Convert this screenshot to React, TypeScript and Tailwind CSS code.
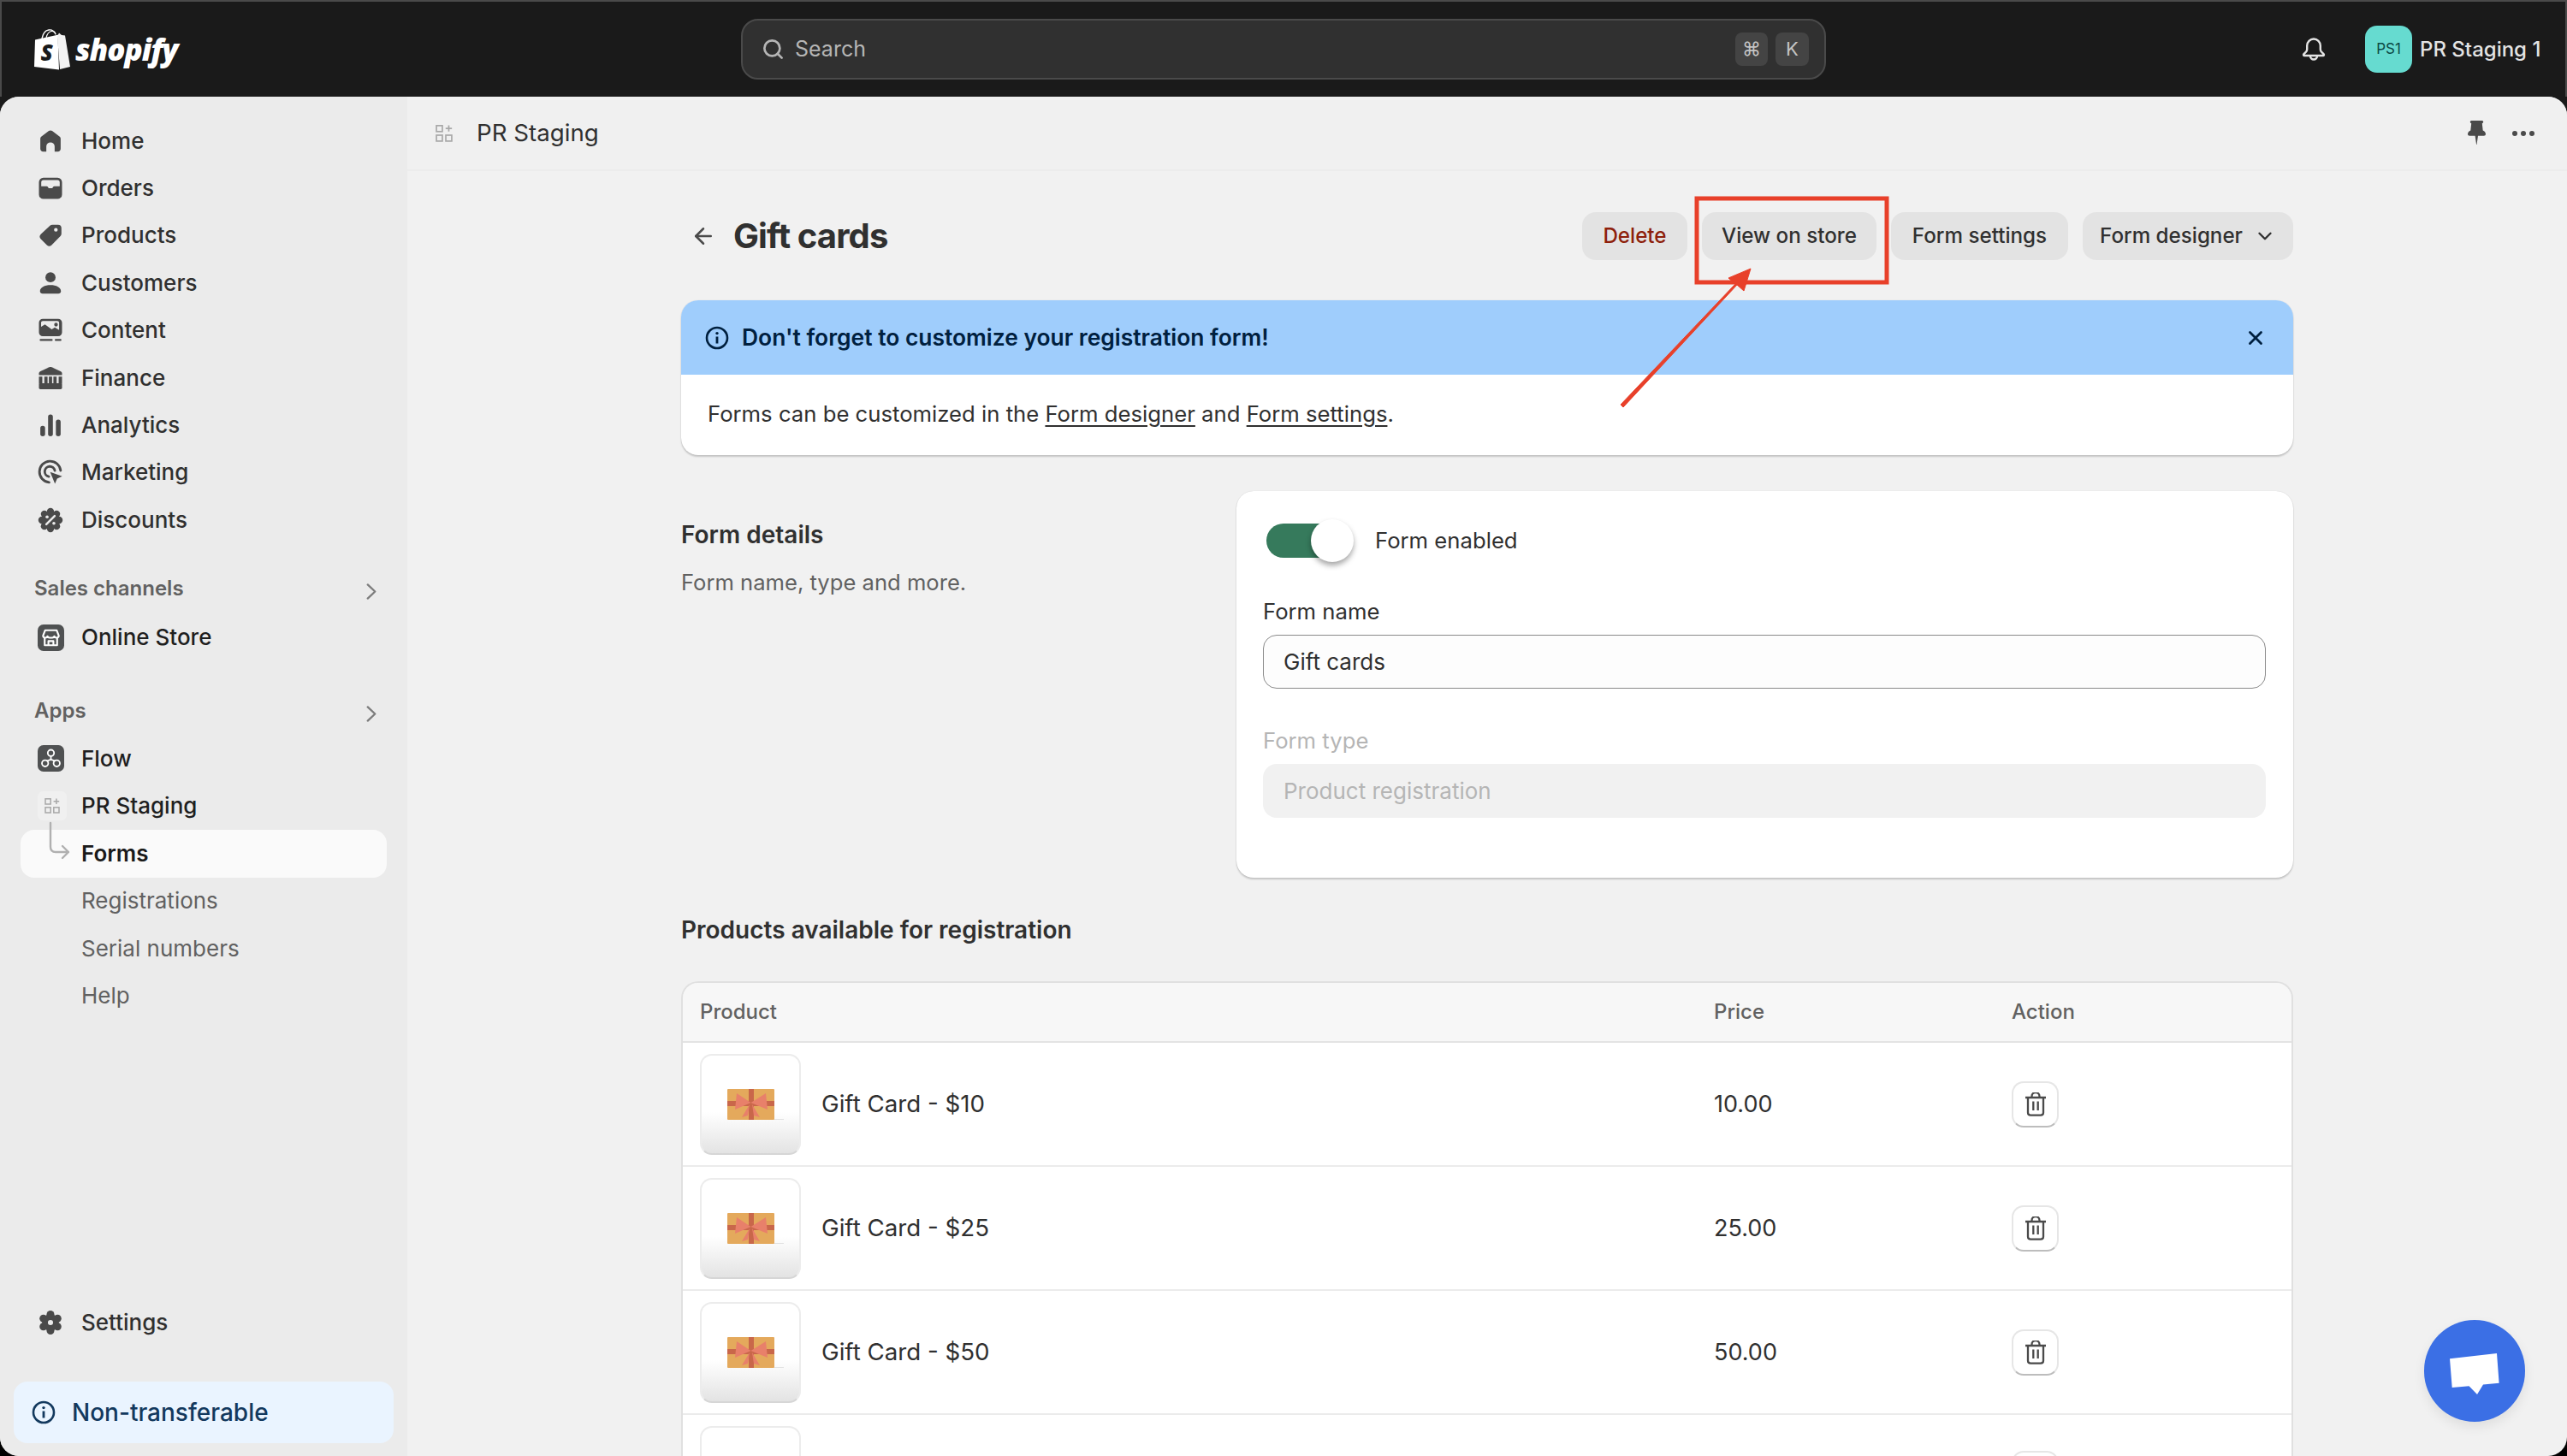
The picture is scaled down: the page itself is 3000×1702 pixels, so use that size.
import React from "react";
import { Search, ChevronDown, ArrowLeft, X } from "lucide-react";

/* ===== icons ===== */
type IconProps = { className?: string };

const Box: React.FC<{ children: React.ReactNode; className?: string }> = ({ children, className }) => (
    <svg viewBox="0 0 20 20" fill="currentColor" className={className ?? "h-[36px] w-[36px] text-[#4a4a4a]"}>
        {children}
    </svg>
);

const HomeIcon = () => (
    <Box>
        <path d="M10 3c-.4 0-.8.13-1.1.38L4 7.1c-.4.3-.6.75-.6 1.2v6.7c0 1 .8 1.8 1.8 1.8h2.100v-3.300a2.700 2.700 0 0 1 5.400 0v3.300h2.100c1 0 1.800-.8 1.800-1.800V8.300c0-.45-.2-.9-.6-1.200l-4.900-3.720A1.800 1.800 0 0 0 10 3Z" />
    </Box>
);
const OrdersIcon = () => (
    <Box>
        <path
            fillRule="evenodd"
            d="M5.400 3.200h9.200a2.900 2.900 0 0 1 2.900 2.900v8a2.900 2.900 0 0 1-2.900 2.900H5.400a2.900 2.900 0 0 1-2.900-2.900v-8a2.900 2.900 0 0 1 2.900-2.900ZM4 8.800V6.100c0-.8.6-1.400 1.400-1.400h9.200c.8 0 1.400.6 1.400 1.400v2.700h-3.500c-.4 0-.7.2-.9.5l-.4.7H8.800l-.4-.7a1 1 0 0 0-.9-.5H4Z"
        />
    </Box>
);
const ProductsIcon = () => (
    <Box>
        <path
            fillRule="evenodd"
            d="M11.300 3.200h3.600a2.200 2.200 0 0 1 2.200 2.200V9a2.200 2.200 0 0 1-.65 1.550l-5.700 5.800a2.200 2.200 0 0 1-3.100 0l-3.900-3.900a2.200 2.200 0 0 1 0-3.100l5.800-5.500c.45-.42 1.050-.65 1.750-.65ZM13.500 5.300a1.200 1.200 0 1 0 0 2.400 1.200 1.200 0 0 0 0-2.400Z"
        />
    </Box>
);
const CustomersIcon = () => (
    <Box>
        <circle cx="10" cy="6.200" r="3.300" />
        <path d="M3.200 15.300c0-2.500 3-4 6.800-4s6.800 1.500 6.800 4c0 1-.8 1.500-1.700 1.500H4.900c-.9 0-1.700-.5-1.700-1.500Z" />
    </Box>
);
const ContentIcon = () => (
    <Box>
        <path
            fillRule="evenodd"
            d="M5 2.600h10A2.500 2.500 0 0 1 17.500 5.100v6.300a2.500 2.500 0 0 1-2.500 2.500H5a2.500 2.500 0 0 1-2.500-2.500V5.100A2.500 2.500 0 0 1 5 2.600Zm0 1.400c-.6 0-1.100.5-1.100 1.100v2.700l2.500-1.600 4.400 3.200 2-1.200 2.800 1.600V5.100c0-.6-.5-1.100-1.100-1.100H5Zm8.600 1.200a1.200 1.200 0 1 0 0 2.400 1.200 1.200 0 0 0 0-2.400Z"
        />
        <rect x="3" y="15.700" width="8.400" height="1.200" rx=".5" />
        <rect x="12.800" y="15.700" width="4.300" height="1.200" rx=".5" />
    </Box>
);
const FinanceIcon = () => (
    <Box>
        <path d="M9.200 2.900c.5-.2 1.100-.2 1.600 0l5.700 2.600c.6.3 1 .8 1 1.400v1.200h-15V6.900c0-.6.4-1.100 1-1.400l5.700-2.600Z" />
        <path d="M2.500 9h2.200v4.800H2.500zM6 9h2.100v4.800H6zM8.950 9h2.100v4.800h-2.100zM11.900 9H14v4.800h-2.100zM15.300 9h2.200v4.800h-2.200z" />
        <rect x="2.500" y="13.300" width="15" height="3.900" rx=".9" />
    </Box>
);
const AnalyticsIcon = () => (
    <Box>
        <rect x="3.400" y="10.400" width="3.100" height="6.800" rx="1.500" />
        <rect x="8.450" y="3" width="3.100" height="14.200" rx="1.500" />
        <rect x="13.500" y="6.400" width="3.100" height="10.800" rx="1.500" />
    </Box>
);
const MarketingIcon = () => (
    <Box>
        <g fill="none" stroke="currentColor" strokeWidth="1.600" strokeLinecap="round">
            <path d="M16.600 8.900A6.900 6.900 0 1 0 9.100 16.600" />
            <path d="M12.800 8.900A3.300 3.300 0 1 0 8.900 12.800" />
        </g>
        <path d="m9.800 9.800 7.800 2.900-3.300 1.400-1.400 3.400-3.100-7.700Z" />
    </Box>
);
const DiscountsIcon = () => (
    <Box>
        {[0, 45, 90, 135, 180, 225, 270, 315].map((a) => (
            <circle key={a} cx={10 + 5.6 * Math.cos((a * Math.PI) / 180)} cy={10 + 5.6 * Math.sin((a * Math.PI) / 180)} r="2.300" />
        ))}
        <circle cx="10" cy="10" r="5.800" />
        <path d="m12.700 7.300-5.400 5.400" stroke="#ebebeb" strokeWidth="1.400" strokeLinecap="round" />
        <circle cx="7.800" cy="7.900" r="1" fill="#ebebeb" />
        <circle cx="12.200" cy="12.100" r="1" fill="#ebebeb" />
    </Box>
);
const SettingsIcon = () => (
    <Box>
        {[30, 90, 150, 210, 270, 330].map((a) => (
            <circle key={a} cx={10 + 5.3 * Math.cos((a * Math.PI) / 180)} cy={10 + 5.3 * Math.sin((a * Math.PI) / 180)} r="2.500" />
        ))}
        <circle cx="10" cy="10" r="5.500" />
        <circle cx="10" cy="10" r="1.700" fill="#ebebeb" />
    </Box>
);
const StoreIcon = () => (
    <svg viewBox="0 0 32 32" className="h-[31px] w-[31px]">
        <rect width="32" height="32" rx="7" fill="#4f5152" />
        <g fill="none" stroke="#fff" strokeWidth="2.200" strokeLinejoin="round">
            <path d="M9 7h14l2.500 6.500c0 1.600-1.300 2.500-2.700 2.500-1.300 0-2.300-.8-2.600-1.800-.4 1-1.300 1.800-2.600 1.800H14.400c-1.300 0-2.200-.8-2.600-1.800-.3 1-1.300 1.800-2.600 1.800-1.400 0-2.700-.9-2.700-2.500L9 7Z" />
            <path d="M8.500 16v9h15v-9" />
            <path d="M13 25v-5h6v5" />
        </g>
    </svg>
);
const FlowIcon = () => (
    <svg viewBox="0 0 32 32" className="h-[31px] w-[31px]">
        <rect width="32" height="32" rx="7" fill="#4f5152" />
        <g fill="none" stroke="#fff" strokeWidth="1.900">
            <circle cx="16" cy="9.500" r="3.800" />
            <circle cx="9" cy="22" r="3.800" />
            <circle cx="23" cy="22" r="3.800" />
            <path d="M16 13.300v4.200M16 17.500l-5.200 1.800M16 17.500l5.200 1.800" />
        </g>
    </svg>
);
const AppTileIcon: React.FC<IconProps> = ({ className }) => (
    <svg viewBox="0 0 34 34" className={className}>
        <rect width="34" height="34" rx="6" fill="#f0f0f0" />
        <g fill="none" stroke="#a8a8a8" strokeWidth="1.500">
            <rect x="9" y="8.800" width="6.200" height="6.200" />
            <rect x="9" y="18.800" width="6.200" height="6.200" />
            <rect x="18.800" y="18.800" width="6.200" height="6.200" />
            <path d="M21.900 8.500v6.500M18.600 11.800h6.600" />
        </g>
    </svg>
);
const InfoIcon: React.FC<IconProps> = ({ className }) => (
    <svg viewBox="0 0 28 28" fill="none" className={className}>
        <circle cx="14" cy="14" r="12" stroke="currentColor" strokeWidth="2.600" />
        <circle cx="14" cy="8.600" r="1.700" fill="currentColor" />
        <path d="M14 12.500v8" stroke="currentColor" strokeWidth="2.800" />
    </svg>
);
const ChevronRightSmall = () => (
    <svg viewBox="0 0 12 20" fill="none" className="h-[19px] w-[12px]">
        <path d="m1.500 1.500 9 8.500-9 8.500" stroke="#7c7c7c" strokeWidth="2.400" strokeLinecap="round" strokeLinejoin="round" />
    </svg>
);
const BellIcon = () => (
    <svg viewBox="0 0 28 28" fill="none" className="h-[28px] w-[28px] text-[#e3e3e3]">
        <path
            d="M14 1.500a7.800 7.800 0 0 0-7.800 7.800v4.200c0 1-.3 2-.9 2.800l-3 3.100c-.6.700-.1 1.600.7 1.600h22c.8 0 1.300-.9.700-1.600l-3-3.100c-.6-.8-.9-1.800-.9-2.800V9.300A7.800 7.800 0 0 0 14 1.500Z"
            stroke="currentColor"
            strokeWidth="2.400"
        />
        <path d="M10 21.500a4 4 0 0 0 8 0" stroke="currentColor" strokeWidth="2.400" />
    </svg>
);
const PinIcon = () => (
    <svg viewBox="0 0 21 29" className="h-[29px] w-[21px]" fill="#4a4a4a">
        <path d="M4.500 0h12c1 0 1.700.7 1.700 1.600 0 .8-.6 1.400-1.400 1.600l.9 8.200c2 1 3.300 2.500 3.300 4.300 0 1.200-.9 2-2.100 2h-6.900l-1.500 10.300h-.4L8.600 17.700H2.100c-1.200 0-2.100-.8-2.100-2 0-1.800 1.300-3.300 3.300-4.300l.9-8.200C3.400 3 2.800 2.400 2.800 1.600 2.800.7 3.500 0 4.500 0Z" />
    </svg>
);
const TrashIcon = () => (
    <svg viewBox="0 0 26 28" fill="none" className="h-[28px] w-[26px]" stroke="#4a4a4a" strokeWidth="2.300">
        <path d="M1 6h24M8.500 6V4.500a4.500 4.500 0 0 1 9 0V6" />
        <path d="M4 6v17.500c0 1.800 1.400 3.200 3.200 3.200h11.600c1.800 0 3.200-1.400 3.200-3.200V6" />
        <path d="M10.300 10.500V21M15.700 10.500V21" />
    </svg>
);
const GiftBox = () => (
    <svg viewBox="0 0 70 38" className="h-[38px] w-[70px]">
        <rect x="0" y="1" width="55" height="36" rx="1" fill="#e4a95c" />
        <rect x="25" y="1" width="6" height="36" fill="#c9674a" />
        <rect x="0" y="15" width="55" height="6" fill="#c9674a" />
        <path d="M27.500 17 11 6 9 25ZM27.500 17 45 6l2 19Z" fill="#e8806a" />
        <path d="m26 19-9 15 7-2ZM29 19l9 15-7-2Z" fill="#e8806a" />
        <path d="M55 36h11v1H55z" fill="#e2e2e2" />
    </svg>
);
const ShopifyBag = () => (
    <svg viewBox="0 0 42 48" className="h-[48px] w-[42px]">
        <path d="M27 8.500 30 47l12-3L36 7.500l-4-.5-3-2.500Z" fill="#fff" opacity=".95" />
        <path d="M28.500 6.500 1 12.500 0 44l29 3.500-1.500-39Z" fill="#fff" />
        <path d="M9 11c1-5 4-9.500 8-10 3-.4 6 .5 8 5" fill="none" stroke="#fff" strokeWidth="1.400" />
        <path d="M14 10c1-4 3-7 6-7.500 2.500-.3 4.500 1 5 4" fill="none" stroke="#fff" strokeWidth="1.200" />
        <text x="14.500" y="37" textAnchor="middle" fontFamily="'Open Sans', sans-serif" fontSize="26" fontStyle="italic" fontWeight="800" fill="#1a1a1a">
            S
        </text>
    </svg>
);

/* ===== sidebar ===== */
const Row: React.FC<{ icon?: React.ReactNode; label: string; textClass?: string }> = ({
    icon,
    label,
    textClass = "font-medium text-[#303030]",
}) => (
    <div className="flex h-[55.4px] items-center">
        <div className="w-[95px] shrink-0 pl-[41px]">{icon}</div>
        <span className={`text-[26px] leading-none ${textClass}`}>{label}</span>
    </div>
);

const MAIN_NAV = [
    { label: "Home", icon: <HomeIcon /> },
    { label: "Orders", icon: <OrdersIcon /> },
    { label: "Products", icon: <ProductsIcon /> },
    { label: "Customers", icon: <CustomersIcon /> },
    { label: "Content", icon: <ContentIcon /> },
    { label: "Finance", icon: <FinanceIcon /> },
    { label: "Analytics", icon: <AnalyticsIcon /> },
    { label: "Marketing", icon: <MarketingIcon /> },
    { label: "Discounts", icon: <DiscountsIcon /> },
];

const SectionTitle: React.FC<{ label: string }> = ({ label }) => (
    <div className="flex h-[55px] items-center justify-between pr-[36px] pl-[40px]">
        <span className="text-[24px] leading-none font-semibold text-[#616161]">{label}</span>
        <span className="mt-[6px]">
            <ChevronRightSmall />
        </span>
    </div>
);

const Sidebar = () => (
    <aside className="flex w-[476px] shrink-0 flex-col bg-[#ebebeb] pt-[24px] pb-[15px]">
        {MAIN_NAV.map((n) => (
            <Row key={n.label} label={n.label} icon={n.icon} />
        ))}
        <div className="mt-[25px] pb-[2px]">
            <SectionTitle label="Sales channels" />
        </div>
        <Row label="Online Store" icon={<div className="ml-[3px]"><StoreIcon /></div>} textClass="font-medium text-[#1f1f1f]" />
        <div className="mt-[31px]">
            <SectionTitle label="Apps" />
        </div>
        <Row label="Flow" icon={<div className="ml-[3px]"><FlowIcon /></div>} textClass="font-medium text-[#1f1f1f]" />
        <Row label="PR Staging" icon={<AppTileIcon className="ml-[3px] h-[34px] w-[34px]" />} textClass="font-medium text-[#1f1f1f]" />
        <div className="relative mx-[24px] flex h-[56px] items-center rounded-[16px] bg-[#fafafa] pl-[71px]">
            <svg viewBox="0 0 30 46" fill="none" className="absolute top-[-10px] left-[33px] h-[46px] w-[30px]" stroke="#b0b0b0" strokeWidth="2.400" strokeLinecap="round" strokeLinejoin="round">
                <path d="M2 2v28c0 4 2 6 6 6h15M16 29l7 7-7 7" />
            </svg>
            <span className="text-[26px] leading-none font-semibold text-[#1a1a1a]">Forms</span>
        </div>
        <Row label="Registrations" textClass="font-normal text-[#616161]" />
        <Row label="Serial numbers" textClass="font-normal text-[#616161]" />
        <Row label="Help" textClass="font-normal text-[#616161]" />
        <div className="mt-auto mb-[41px]">
            <Row label="Settings" icon={<SettingsIcon />} />
        </div>
        <div className="mx-[16px] flex h-[72px] items-center gap-[19px] rounded-[16px] bg-[#eaf4ff] pl-[21px] text-[#13395e]">
            <InfoIcon className="h-[28px] w-[28px]" />
            <span className="text-[28px] leading-none font-medium">Non-transferable</span>
        </div>
    </aside>
);

/* ===== page ===== */
const Btn: React.FC<{ children: React.ReactNode; className?: string }> = ({ children, className = "text-[#303030]" }) => (
    <div className={`flex h-[56px] items-center justify-center rounded-[16px] bg-[#e3e3e3] text-[24.2px] leading-none font-medium ${className}`}>
        {children}
    </div>
);

const PRODUCTS = [
    { name: "Gift Card - $10", price: "10.00" },
    { name: "Gift Card - $25", price: "25.00" },
    { name: "Gift Card - $50", price: "50.00" },
];

const ProductRow: React.FC<{ name: string; price: string }> = ({ name, price }) => (
    <div className="grid h-[145px] grid-cols-[1205px_348px_1fr] items-center border-b-2 border-[#ebebeb] bg-white leading-none text-[#303030]">
        <div className="flex items-center pl-[20px]">
            <div className="flex h-[118px] w-[118px] items-center justify-center rounded-[14px] border-2 border-[#ececec] border-b-[#d6d6d6] bg-[linear-gradient(#ffffff_58%,#e3e3e3)] pl-[15px]">
                <GiftBox />
            </div>
            <span className="ml-[24px] text-[27.7px]">{name}</span>
        </div>
        <div className="text-[27px]">{price}</div>
        <div>
            <div className="flex h-[54px] w-[55px] items-center justify-center rounded-[14px] border-2 border-[#e6e6e6] border-b-[#bdbdbd] bg-white">
                <TrashIcon />
            </div>
        </div>
    </div>
);

export default function App() {
    return (
        <div className="relative h-[1702px] w-[3000px] overflow-hidden bg-[linear-gradient(#1a1a1a_50%,#000000_50%)] font-['Inter',sans-serif]">
            {/* top bar */}
            <header className="relative flex h-[113px] items-center border-x-2 border-t-2 border-b-0 border-[#4a4a4a] bg-[#1a1a1a]">
                <div className="flex w-[864px] shrink-0 items-center pl-[38px]">
                    <ShopifyBag />
                    <span className="ml-[6px] font-['Open_Sans',sans-serif] text-[35px] leading-none font-extrabold tracking-[-1px] text-white italic">shopify</span>
                </div>
                <div className="flex h-[71px] w-[1268px] items-center rounded-[20px] border-2 border-[#4a4a4a] bg-[#303030] pr-[18px] pl-[22px]">
                    <Search className="h-[27px] w-[27px] text-[#b5b5b5]" strokeWidth={2.4} />
                    <span className="ml-[12px] text-[25px] leading-none text-[#b5b5b5]">Search</span>
                    <div className="ml-auto flex gap-[9px]">
                        <div className="flex h-[39px] w-[38px] items-center justify-center rounded-[8px] bg-[#444444] text-[22px] text-[#c4c4c4]">⌘</div>
                        <div className="flex h-[39px] w-[39px] items-center justify-center rounded-[8px] bg-[#444444] text-[22px] text-[#c4c4c4]">K</div>
                    </div>
                </div>
                <div className="ml-[556px]">
                    <BellIcon />
                </div>
                <div className="ml-[46px] flex h-[55px] w-[55px] items-center justify-center rounded-[14px] bg-[#66dbd0] text-[17px] leading-none text-[#0c4a45]">PS1</div>
                <span className="ml-[9px] text-[24px] leading-none font-medium whitespace-nowrap text-[#e3e3e3]">PR Staging 1</span>
            </header>

            {/* panel */}
            <div className="flex h-[1589px] overflow-hidden rounded-[22px] bg-[#f1f1f1]">
                <Sidebar />
                <main className="flex min-w-0 flex-1 flex-col">
                    <div className="flex h-[87px] shrink-0 items-center border-b-2 border-[#ececec] bg-[#f0f0f0] pr-[38px] pl-[24px]">
                        <AppTileIcon className="h-[38px] w-[38px]" />
                        <span className="ml-[19px] pt-[1px] text-[27.7px] leading-none font-normal text-[#303030]">PR Staging</span>
                        <div className="ml-auto flex items-center gap-[31px]">
                            <PinIcon />
                            <div className="flex gap-[4px]">
                                <span className="h-[6px] w-[6px] rounded-full bg-[#4a4a4a]" />
                                <span className="h-[6px] w-[6px] rounded-full bg-[#4a4a4a]" />
                                <span className="h-[6px] w-[6px] rounded-full bg-[#4a4a4a]" />
                            </div>
                        </div>
                    </div>

                    <div className="mx-auto w-[1884px] pt-[48px]">
                        {/* title row */}
                        <div className="flex h-[56px] items-center">
                            <ArrowLeft className="ml-[11px] h-[30px] w-[30px] text-[#4a4a4a]" strokeWidth={2} />
                            <h1 className="ml-[20px] text-[40px] leading-none font-bold tracking-[-0.9px] text-[#303030]">Gift cards</h1>
                            <div className="ml-auto flex gap-[17px]">
                                <Btn className="w-[123px] text-[#8e1f0b]">Delete</Btn>
                                <Btn className="w-[204px] text-[#303030]">View on store</Btn>
                                <Btn className="w-[207px] text-[#303030]">Form settings</Btn>
                                <Btn className="w-[246px] gap-[13px] text-[#303030]">
                                    Form designer
                                    <ChevronDown className="h-[26px] w-[26px]" strokeWidth={2.2} />
                                </Btn>
                            </div>
                        </div>

                        {/* banner */}
                        <div className="mt-[47px] h-[181px] overflow-hidden rounded-[20px] bg-white shadow-[0_2px_2px_rgba(0,0,0,0.18),0_0_1px_rgba(0,0,0,0.2)]">
                            <div className="flex h-[87px] items-center bg-[#9fcdfc] pr-[31px] pl-[28px] text-[#00203f]">
                                <InfoIcon className="h-[28px] w-[28px]" />
                                <span className="ml-[15px] text-[26.4px] leading-none font-semibold">Don't forget to customize your registration form!</span>
                                <X className="ml-auto h-[26px] w-[26px]" strokeWidth={2.6} />
                            </div>
                            <div className="flex h-[94px] items-center pb-[3px] pl-[31px] text-[25.7px] leading-none text-[#303030]">
                                <span>
                                    Forms can be customized in the <span className="underline underline-offset-4">Form designer</span> and{" "}
                                    <span className="underline underline-offset-4">Form settings</span>.
                                </span>
                            </div>
                        </div>

                        {/* form details */}
                        <div className="mt-[42px] flex">
                            <div className="w-[649px] shrink-0 pt-[37px]">
                                <div className="text-[28px] leading-[28px] font-semibold text-[#303030]">Form details</div>
                                <div className="mt-[28px] text-[25.6px] leading-[28px] text-[#616161]">Form name, type and more.</div>
                            </div>
                            <div className="h-[452px] flex-1 rounded-[20px] bg-white pt-[33px] pr-[32px] pl-[31px] shadow-[0_2px_2px_rgba(0,0,0,0.18),0_0_1px_rgba(0,0,0,0.2)]">
                                <div className="flex h-[50px] items-center pl-[4px]">
                                    <div className="relative h-[40px] w-[88px]">
                                        <div className="h-[40px] w-[80px] rounded-full bg-[#367a5c]" />
                                        <div className="absolute top-[-5px] left-[52px] h-[50px] w-[50px] rounded-full bg-white shadow-[0_4px_6px_rgba(0,0,0,0.35)]" />
                                    </div>
                                    <span className="ml-[39px] text-[25.7px] leading-none text-[#303030]">Form enabled</span>
                                </div>
                                <div className="mt-[40px] text-[25.7px] leading-[36px] text-[#303030]">Form name</div>
                                <div className="mt-[9px] flex h-[63px] items-center rounded-[16px] border-[1.5px] border-[#8a8a8a] bg-[#fdfdfd] pl-[23px] text-[26px] leading-none text-[#303030]">Gift cards</div>
                                <div className="mt-[43px] text-[25.7px] leading-[36px] text-[#b5b5b5]">Form type</div>
                                <div className="mt-[9px] flex h-[63px] items-center rounded-[16px] bg-[#f1f1f1] pl-[24px] text-[26px] leading-none text-[#b5b5b5]">Product registration</div>
                            </div>
                        </div>

                        {/* products */}
                        <div className="flex h-[121px] items-center pt-[1px] text-[28px] leading-none font-semibold text-[#303030]">Products available for registration</div>

                        <div className="overflow-hidden rounded-t-[20px] border-x-2 border-t-2 border-[#e0e0e0]">
                            <div className="grid h-[70px] grid-cols-[1205px_348px_1fr] items-center border-b-2 border-[#e3e3e3] bg-[#f7f7f7] text-[24px] leading-none font-medium text-[#616161]">
                                <div className="pl-[20px]">Product</div>
                                <div>Price</div>
                                <div>Action</div>
                            </div>
                            {PRODUCTS.map((p) => (
                                <ProductRow key={p.name} name={p.name} price={p.price} />
                            ))}
                            <div className="flex h-[60px] bg-white pt-[13px] pl-[20px]">
                                <div className="h-[118px] w-[118px] rounded-[14px] border-2 border-[#ececec]" />
                                <div className="mt-[29px] ml-[1415px] h-[54px] w-[55px] rounded-[14px] border-2 border-[#e6e6e6]" />
                            </div>
                        </div>
                    </div>
                </main>
            </div>

            {/* chat bubble */}
            <div className="absolute top-[1543px] left-[2833px] flex h-[119px] w-[118px] items-center justify-center rounded-full bg-[#3b6fe5] pt-[6px] shadow-[0_6px_14px_rgba(0,0,0,0.08)]">
                <svg viewBox="0 0 58 48" className="h-[48px] w-[58px]" fill="#fff">
                    <path d="M0 6.200 55 0l2.600 34.700-18.600 1.800-7 11.500-9.500-9.700L2.700 40Z" />
                </svg>
            </div>

            {/* red annotation */}
            <svg viewBox="0 0 3000 1702" className="pointer-events-none absolute inset-0 h-[1702px] w-[3000px]">
                <rect x="1983" y="232" width="222" height="98" fill="none" stroke="#e8402a" strokeWidth="5" />
                <path d="M1894 473l3 3 133-143 8 7 8-26-26 11 8 7Z" fill="#e8402a" stroke="#e8402a" strokeWidth="1" />
            </svg>
        </div>
    );
}
